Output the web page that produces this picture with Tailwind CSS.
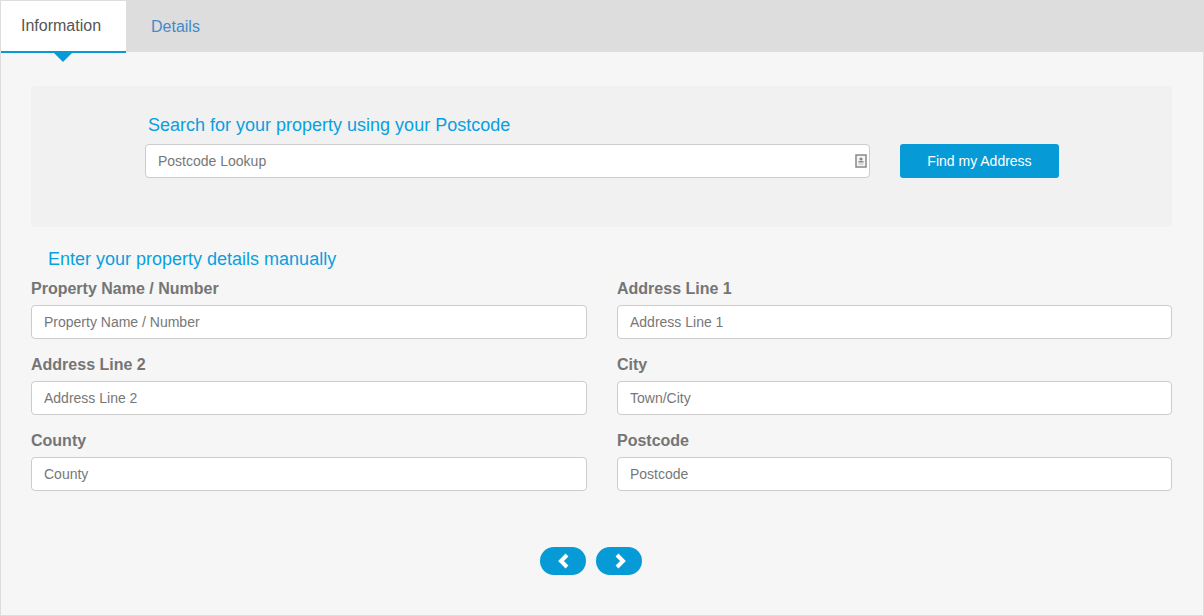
<!DOCTYPE html>
<html lang="en">
<head>
    <meta charset="UTF-8">
    <title>Property Information</title>
    <script src="https://cdn.jsdelivr.net/npm/@tailwindcss/browser@4"></script>
</head>
<body class="bg-[#f6f6f6] font-['Liberation_Sans',Arial,sans-serif]">
    <div class="w-[1204px] h-[616px] border border-[#dddddd] bg-[#f6f6f6] overflow-hidden">

        <!-- Tabs -->
        <div class="flex h-[51px] bg-[#dddddd]">
            <div class="relative w-[125px] h-[52px] pl-[20px] bg-white border-b-2 border-[#069bd7] text-[16px] leading-[49px] text-[#555555]">
                Information
                <span class="absolute left-[53px] top-[52px] w-0 h-0 border-x-[9px] border-x-transparent border-t-[9px] border-t-[#069bd7]"></span>
            </div>
            <div class="pl-[25px] text-[16px] leading-[51px] text-[#428bca]">Details</div>
        </div>

        <div class="pl-[30px] pr-[31px] pt-[34px]">
            <!-- Postcode search -->
            <div class="h-[141px] bg-[#f1f1f1] rounded-[3px] pl-[114px] pt-[28px]">
                <h2 class="pl-[3px] text-[18px] leading-[22px] text-[#0a9fe0]">Search for your property using your Postcode</h2>
                <div class="flex gap-[30px] mt-[8px]">
                    <div class="relative w-[725px]">
                        <input type="text" placeholder="Postcode Lookup" class="w-full h-[34px] px-[12px] bg-white border border-[#cccccc] rounded-[4px] text-[14px] text-[#555555] placeholder:text-[#777777]">
                        <svg class="absolute right-[3px] top-[10px]" width="12" height="14" viewBox="0 0 12 14">
                            <rect x="1" y="1" width="10" height="12" fill="#f5f5f5" stroke="#888888" stroke-width="1.5"/>
                            <circle cx="6" cy="5" r="1.6" fill="#888888"/>
                            <rect x="3.5" y="7" width="5" height="1.5" fill="#888888"/>
                            <rect x="3.5" y="9.5" width="5" height="1" fill="#bbbbbb"/>
                        </svg>
                    </div>
                    <button class="w-[159px] h-[34px] bg-[#069bd7] rounded-[3px] text-[14px] text-white">Find my Address</button>
                </div>
            </div>

            <!-- Manual entry -->
            <h2 class="pl-[17px] mt-[21px] text-[18px] leading-[22px] text-[#0a9fe0]">Enter your property details manually</h2>
            <div class="grid grid-cols-[556px_555px] gap-x-[30px] gap-y-[16px] mt-[9px]">
                <div>
                    <label class="block text-[16px] font-bold leading-[20px] text-[#757575] mb-[6px]">Property Name / Number</label>
                    <input type="text" placeholder="Property Name / Number" class="w-full h-[34px] px-[12px] bg-white border border-[#cccccc] rounded-[4px] text-[14px] placeholder:text-[#777777]">
                </div>
                <div>
                    <label class="block text-[16px] font-bold leading-[20px] text-[#757575] mb-[6px]">Address Line 1</label>
                    <input type="text" placeholder="Address Line 1" class="w-full h-[34px] px-[12px] bg-white border border-[#cccccc] rounded-[4px] text-[14px] placeholder:text-[#777777]">
                </div>
                <div>
                    <label class="block text-[16px] font-bold leading-[20px] text-[#757575] mb-[6px]">Address Line 2</label>
                    <input type="text" placeholder="Address Line 2" class="w-full h-[34px] px-[12px] bg-white border border-[#cccccc] rounded-[4px] text-[14px] placeholder:text-[#777777]">
                </div>
                <div>
                    <label class="block text-[16px] font-bold leading-[20px] text-[#757575] mb-[6px]">City</label>
                    <input type="text" placeholder="Town/City" class="w-full h-[34px] px-[12px] bg-white border border-[#cccccc] rounded-[4px] text-[14px] placeholder:text-[#777777]">
                </div>
                <div>
                    <label class="block text-[16px] font-bold leading-[20px] text-[#757575] mb-[6px]">County</label>
                    <input type="text" placeholder="County" class="w-full h-[34px] px-[12px] bg-white border border-[#cccccc] rounded-[4px] text-[14px] placeholder:text-[#777777]">
                </div>
                <div>
                    <label class="block text-[16px] font-bold leading-[20px] text-[#757575] mb-[6px]">Postcode</label>
                    <input type="text" placeholder="Postcode" class="w-full h-[34px] px-[12px] bg-white border border-[#cccccc] rounded-[4px] text-[14px] placeholder:text-[#777777]">
                </div>
            </div>

            <!-- Prev / next -->
            <div class="flex justify-center gap-[10px] mt-[56px] pr-[21px]">
                <button class="flex items-center justify-center w-[46px] h-[28px] bg-[#069bd7] rounded-full">
                    <svg width="14" height="16" viewBox="0 0 14 16"><path d="M11 2 L5 8 L11 14" fill="none" stroke="#ffffff" stroke-width="4"/></svg>
                </button>
                <button class="flex items-center justify-center w-[46px] h-[28px] bg-[#069bd7] rounded-full">
                    <svg class="ml-[2px]" width="14" height="16" viewBox="0 0 14 16"><path d="M4 2 L10 8 L4 14" fill="none" stroke="#ffffff" stroke-width="4"/></svg>
                </button>
            </div>
        </div>
    </div>
</body>
</html>
